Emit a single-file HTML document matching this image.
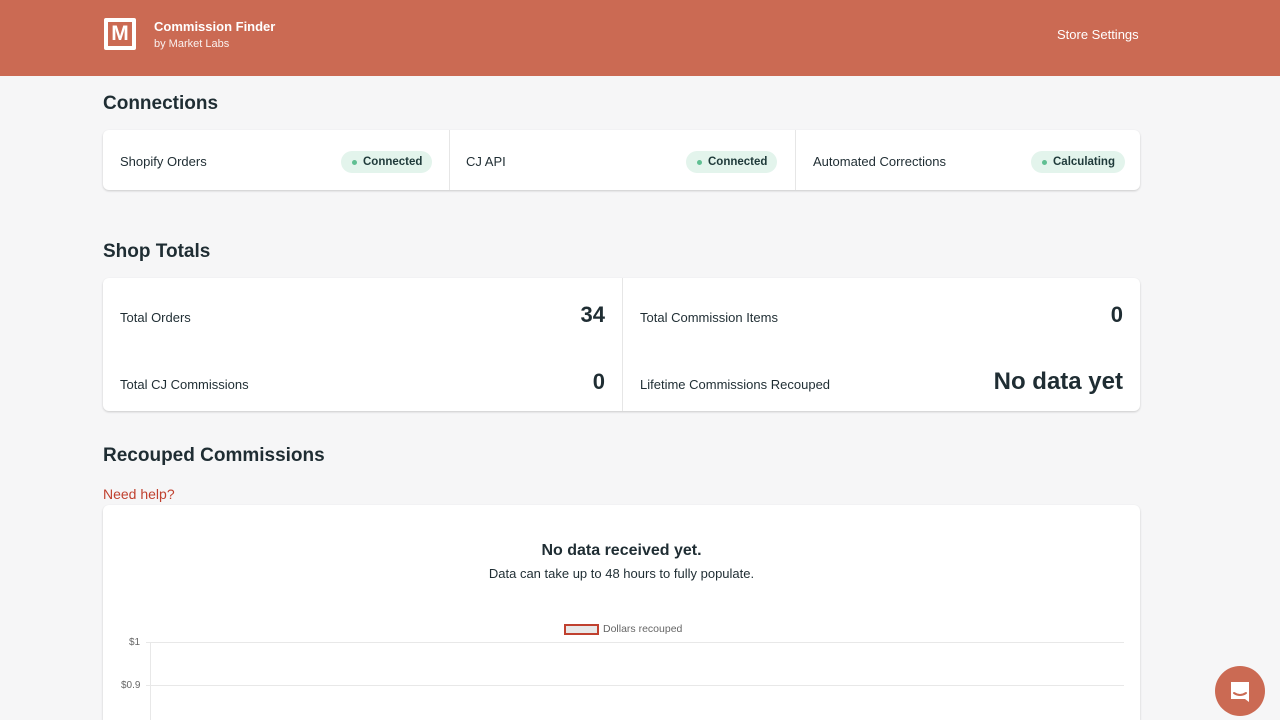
<!DOCTYPE html>
<html style="width:1280px;height:720px;overflow:hidden"><head><meta charset="utf-8"><style>
*{box-sizing:border-box;margin:0;padding:0}
body{width:1280px;height:720px;overflow:hidden;background:#f6f6f7;font-family:"Liberation Sans",sans-serif;color:#1f2d33;position:relative}
.hdr{position:absolute;left:0;top:0;width:1280px;height:76px;background:#cb6a53;color:#fff}
.logo{position:absolute;left:104px;top:18px;width:32px;height:32px;background:#fff;border-radius:2px}
.logo span{position:absolute;left:4px;top:4px;width:24px;height:24px;background:#cb6a53;color:#fff;font-weight:bold;font-size:21px;line-height:24px;text-align:center}
.t1{position:absolute;left:154px;top:19px;font-size:13px;font-weight:bold}
.t2{position:absolute;left:154px;top:38px;font-size:11px;opacity:.9}
.ss{position:absolute;left:1057px;top:27px;font-size:13px}
h2{position:absolute;left:103px;font-size:19px;font-weight:bold;color:#1f2d33}
.card{position:absolute;left:103px;width:1037px;background:#fff;border-radius:6px;box-shadow:0 1px 2px rgba(0,0,0,.18);overflow:hidden}
.cell{position:absolute;font-size:13px}
.badge{position:absolute;height:22px;border-radius:11px;background:#e3f4ec;color:#1f3a3a;font-size:11.5px;font-weight:bold;line-height:22px;padding:0 10px 0 22px}
.badge:before{content:"";position:absolute;left:11px;top:9px;width:5px;height:5px;border-radius:50%;background:#5fbf92}
.vl{position:absolute;top:0;width:1px;background:#e6e6e6}
.num{position:absolute;font-size:22px;font-weight:bold;text-align:right}
</style></head><body>
<div class="hdr"><div class="logo"><span>M</span></div><div class="t1">Commission Finder</div><div class="t2">by Market Labs</div><div class="ss">Store Settings</div></div>
<h2 style="top:93px">Connections</h2>
<div class="card" style="top:130px;height:60px">
<div class="cell" style="left:17px;top:24px">Shopify Orders</div>
<div class="badge" style="left:238px;top:21px">Connected</div>
<div class="vl" style="left:346px;height:60px"></div>
<div class="cell" style="left:363px;top:24px">CJ API</div>
<div class="badge" style="left:583px;top:21px">Connected</div>
<div class="vl" style="left:692px;height:60px"></div>
<div class="cell" style="left:710px;top:24px">Automated Corrections</div>
<div class="badge" style="left:928px;top:21px">Calculating</div>
</div>
<h2 style="top:241px">Shop Totals</h2>
<div class="card" style="top:278px;height:133px">
<div class="cell" style="left:17px;top:32px">Total Orders</div>
<div class="num" style="right:535px;top:24px">34</div>
<div class="cell" style="left:17px;top:99px">Total CJ Commissions</div>
<div class="num" style="right:535px;top:91px">0</div>
<div class="vl" style="left:519px;height:133px"></div>
<div class="cell" style="left:537px;top:32px">Total Commission Items</div>
<div class="num" style="right:17px;top:24px">0</div>
<div class="cell" style="left:537px;top:99px">Lifetime Commissions Recouped</div>
<div class="num" style="right:17px;top:90px;font-size:24px">No data yet</div>
</div>
<h2 style="top:445px">Recouped Commissions</h2>
<div style="position:absolute;left:103px;top:486px;font-size:14px;color:#c0412f">Need help?</div>
<div class="card" style="top:505px;height:215px;border-radius:6px 6px 0 0">
<div style="position:absolute;left:0;width:1037px;top:37px;text-align:center;font-size:16px;font-weight:bold">No data received yet.</div>
<div style="position:absolute;left:0;width:1037px;top:61px;text-align:center;font-size:13px">Data can take up to 48 hours to fully populate.</div>
<div style="position:absolute;left:461px;top:119px;width:35px;height:11px;border:2px solid #c0412f;background:#e8e8e8"></div>
<div style="position:absolute;left:500px;top:118px;font-size:10.5px;color:#666">Dollars recouped</div>
<div style="position:absolute;left:26px;top:132px;font-size:10px;color:#666">$1</div>
<div style="position:absolute;left:18px;top:175px;font-size:10px;color:#666">$0.9</div>
<div style="position:absolute;left:43px;top:137px;width:978px;height:1px;background:#e8e8e8"></div>
<div style="position:absolute;left:43px;top:180px;width:978px;height:1px;background:#e8e8e8"></div>
<div style="position:absolute;left:47px;top:137px;width:1px;height:80px;background:#e8e8e8"></div>
</div>
<div style="position:absolute;left:1215px;top:666px;width:50px;height:50px;border-radius:50%;background:#cb6a53">
<svg width="50" height="50" viewBox="0 0 50 50"><path d="M16 16h18v20l-4-3H16z" fill="#fff"/><path d="M19 27q6 4 12 0" stroke="#cb6a53" stroke-width="2" fill="none" stroke-linecap="round"/></svg></div>
</body></html>
